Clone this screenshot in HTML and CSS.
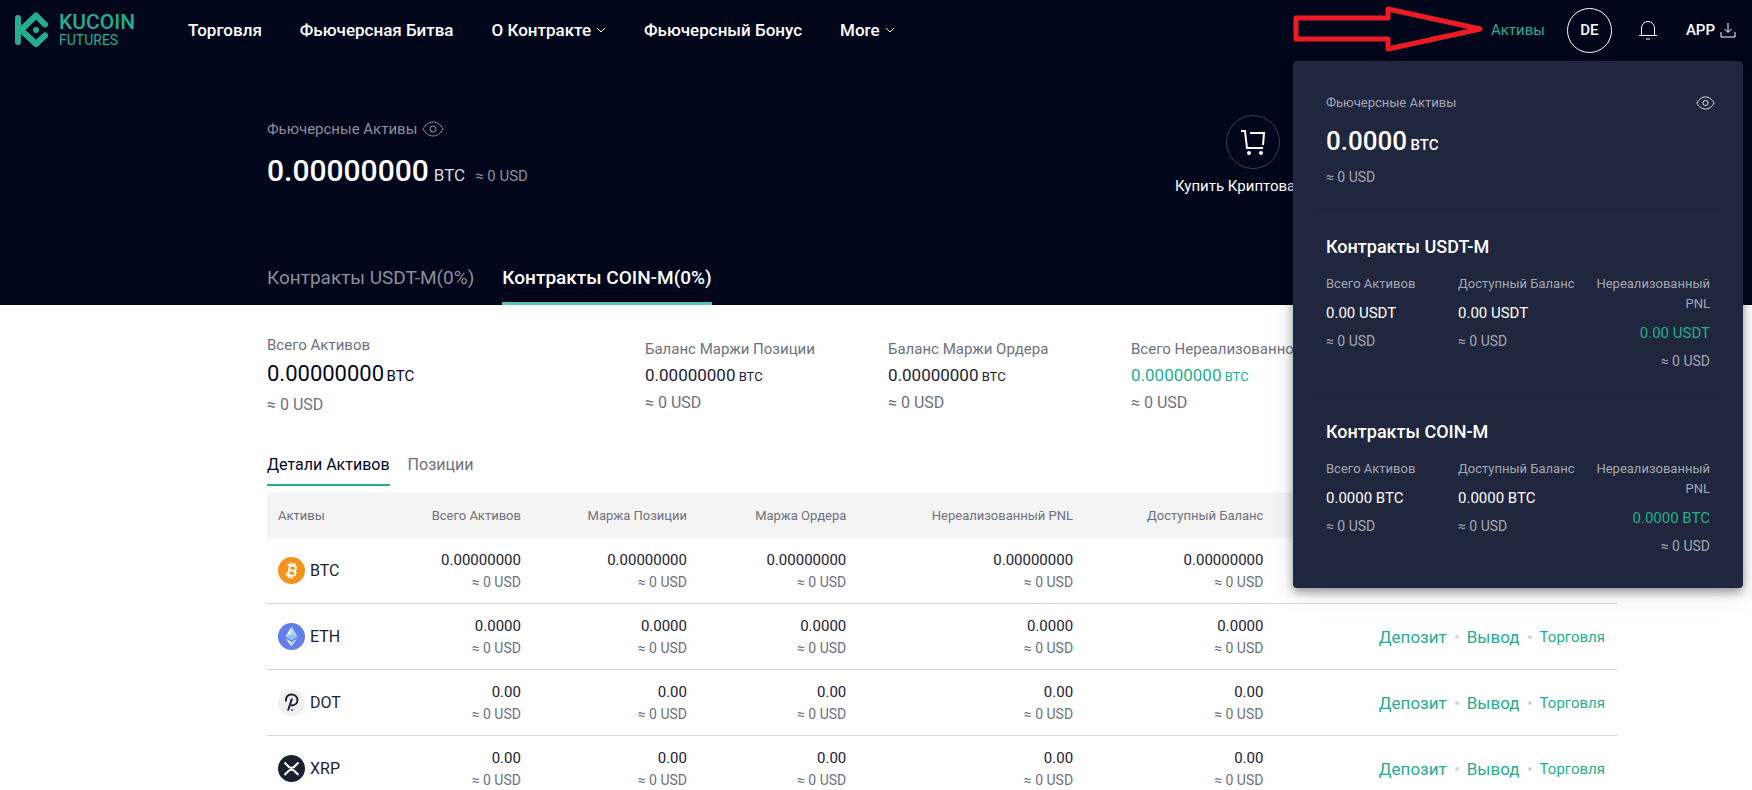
FILE: index.html
```html
<!DOCTYPE html>
<html lang="ru">
<head>
    <meta charset="UTF-8">
    <meta name="viewport" content="width=device-width, initial-scale=1.0">
    <title>KuCoin Futures</title>

    <link rel="stylesheet" href="styles.css">
</head>

<body>

    <svg class="sprite" aria-hidden="true">
        <symbol id="eye" viewBox="0 0 22 16">
            <path d="M1 8C3.500 3.500 7 1 11 1s7.500 2.500 10 7c-2.500 4.500-6 7-10 7S3.500 12.500 1 8z"/>
            <circle cx="11" cy="8" r="3"/>
        </symbol>
        <symbol id="chevron" viewBox="0 0 10 6">
            <path d="M1 1l4 4 4-4"/>
        </symbol>
    </svg>

    <header class="header">
        <a class="logo" href="#">
            <svg width="33" height="36" viewBox="0 0 33 36">
                <path class="logo-line" d="M3 6v24M30 12.500L21 3.500 6 18l15 14 9-8.500"/>
                <circle cx="21" cy="18" r="3"/>
            </svg>
            <span class="logo-text">
                <span class="logo-name">KUCOIN</span>
                <span class="logo-sub">FUTURES</span>
            </span>
        </a>

        <nav class="nav">
            <a href="#">Торговля</a>
            <a href="#">Фьючерсная Битва</a>
            <a href="#">О Контракте <svg class="chevron"><use href="#chevron"/></svg></a>
            <a href="#">Фьючерсный Бонус</a>
            <a href="#">More <svg class="chevron"><use href="#chevron"/></svg></a>
        </nav>

        <div class="user-menu">
            <div class="assets">
                <svg class="arrow" width="192" height="50" viewBox="0 0 192 50">
                    <path d="M4 14h92V5l92 20-92 20V35H4z"/>
                </svg>
                <a class="assets-link" href="#">Активы</a>
            </div>
            <button class="avatar">DE</button>
            <button class="icon-button" aria-label="Уведомления">
                <svg width="20" height="20" viewBox="0 0 20 20">
                    <path d="M1 15.500h18M3.500 15V8a6.500 6.500 0 0 1 13 0v7M8 19h4"/>
                </svg>
            </button>
            <a class="app" href="#">APP
                <svg width="16" height="16" viewBox="0 0 16 16">
                    <path d="M8 1v9M4.500 7L8 10.500 11.500 7M1 10v5h14v-5"/>
                </svg>
            </a>
        </div>

        <section class="panel">
            <div class="panel-block">
                <div class="panel-head">
                    <p class="muted">Фьючерсные Активы</p>
                    <button class="icon-button" aria-label="Скрыть баланс">
                        <svg width="19" height="14"><use href="#eye"/></svg>
                    </button>
                </div>
                <p class="panel-total">0.0000 <small>BTC</small></p>
                <p class="panel-usd">≈ 0 USD</p>
            </div>

            <div class="panel-block">
                <h2>Контракты USDT-M</h2>
                <div class="panel-grid">
                    <div>
                        <p class="muted">Всего Активов</p>
                        <p class="panel-value">0.00 USDT</p>
                        <p class="panel-usd">≈ 0 USD</p>
                    </div>
                    <div>
                        <p class="muted">Доступный Баланс</p>
                        <p class="panel-value">0.00 USDT</p>
                        <p class="panel-usd">≈ 0 USD</p>
                    </div>
                    <div class="right">
                        <p class="muted">Нереализованный PNL</p>
                        <p class="panel-value green">0.00 USDT</p>
                        <p class="panel-usd">≈ 0 USD</p>
                    </div>
                </div>
            </div>

            <div class="panel-block">
                <h2>Контракты COIN-M</h2>
                <div class="panel-grid">
                    <div>
                        <p class="muted">Всего Активов</p>
                        <p class="panel-value">0.0000 BTC</p>
                        <p class="panel-usd">≈ 0 USD</p>
                    </div>
                    <div>
                        <p class="muted">Доступный Баланс</p>
                        <p class="panel-value">0.0000 BTC</p>
                        <p class="panel-usd">≈ 0 USD</p>
                    </div>
                    <div class="right">
                        <p class="muted">Нереализованный PNL</p>
                        <p class="panel-value green">0.0000 BTC</p>
                        <p class="panel-usd">≈ 0 USD</p>
                    </div>
                </div>
            </div>
        </section>
    </header>

    <section class="hero">
        <div class="hero-top">
            <div class="balance">
                <p class="balance-label">Фьючерсные Активы
                    <button class="icon-button" aria-label="Скрыть баланс">
                        <svg width="22" height="16"><use href="#eye"/></svg>
                    </button>
                </p>
                <p class="balance-value">
                    <span class="amount">0.00000000</span>
                    <span class="unit">BTC</span>
                    <span class="usd">≈ 0 USD</span>
                </p>
            </div>
            <a class="buy" href="#">
                <span class="buy-icon">
                    <svg width="26" height="26" viewBox="0 0 26 26">
                        <path d="M1 2h4l2 17h16M10 4h14l-1 12"/>
                        <circle cx="9" cy="24" r="2"/>
                        <circle cx="21" cy="24" r="2"/>
                    </svg>
                </span>
                <span>Купить Криптовалюту</span>
            </a>
        </div>
        <div class="tabs">
            <button>Контракты USDT-M(0%)</button>
            <button class="active">Контракты COIN-M(0%)</button>
        </div>
    </section>

    <main class="content">
        <div class="stats">
            <div class="stat stat-main">
                <p>Всего Активов</p>
                <p class="stat-value">0.00000000 <small>BTC</small></p>
                <p class="stat-usd">≈ 0 USD</p>
            </div>
            <div class="stat">
                <p>Баланс Маржи Позиции</p>
                <p class="stat-value">0.00000000 <small>BTC</small></p>
                <p class="stat-usd">≈ 0 USD</p>
            </div>
            <div class="stat">
                <p>Баланс Маржи Ордера</p>
                <p class="stat-value">0.00000000 <small>BTC</small></p>
                <p class="stat-usd">≈ 0 USD</p>
            </div>
            <div class="stat">
                <p>Всего Нереализованного PNL</p>
                <p class="stat-value green">0.00000000 <small>BTC</small></p>
                <p class="stat-usd">≈ 0 USD</p>
            </div>
        </div>

        <div class="subtabs">
            <button class="active">Детали Активов</button>
            <button>Позиции</button>
        </div>

        <table class="coins">
            <thead>
                <tr>
                    <th class="col-coin">Активы</th>
                    <th class="col-total">Всего Активов</th>
                    <th class="col-position">Маржа Позиции</th>
                    <th class="col-order">Маржа Ордера</th>
                    <th class="col-pnl">Нереализованный PNL</th>
                    <th class="col-free">Доступный Баланс</th>
                    <th></th>
                </tr>
            </thead>
            <tbody>
                <tr>
                    <td>
                        <span class="coin">
                            <svg width="27" height="27" viewBox="0 0 27 27">
                                <circle cx="13.500" cy="13.500" r="13.500" fill="#f7931a"/>
                                <g transform="rotate(12 13.500 13.500)" fill="none" stroke="#fff" stroke-width="2">
                                    <path d="M8.500 8.500h6.500a2.500 2.500 0 0 1 0 5h-4M8.500 18.500h7a2.500 2.500 0 0 0 0-5M11 8.500v10M12 5.500v3M15 5.500v3M12 18.500v3M15 18.500v3"/>
                                </g>
                            </svg>
                            BTC
                        </span>
                    </td>
                    <td>0.00000000<small>≈ 0 USD</small></td>
                    <td>0.00000000<small>≈ 0 USD</small></td>
                    <td>0.00000000<small>≈ 0 USD</small></td>
                    <td>0.00000000<small>≈ 0 USD</small></td>
                    <td>0.00000000<small>≈ 0 USD</small></td>
                    <td><div class="links"><a href="#">Депозит</a><i></i><a href="#">Вывод</a><i></i><a class="trade" href="#">Торговля</a></div></td>
                </tr>
                <tr>
                    <td>
                        <span class="coin">
                            <svg width="27" height="27" viewBox="0 0 27 27">
                                <circle cx="13.500" cy="13.500" r="13.500" fill="#627eea"/>
                                <path d="M13.500 3.500v11.500l-6-1.500z" fill="#eef6ff"/>
                                <path d="M13.500 3.500V15l6-1.500z" fill="#b5dcfb"/>
                                <path d="M7.500 13.500l6-3 6 3-6 4z" fill="#8cc3f5"/>
                                <path d="M7.500 15.500l6 3.500v4.500z" fill="#eef6ff"/>
                                <path d="M19.500 15.500l-6 3.500v4.500z" fill="#b5dcfb"/>
                            </svg>
                            ETH
                        </span>
                    </td>
                    <td>0.0000<small>≈ 0 USD</small></td>
                    <td>0.0000<small>≈ 0 USD</small></td>
                    <td>0.0000<small>≈ 0 USD</small></td>
                    <td>0.0000<small>≈ 0 USD</small></td>
                    <td>0.0000<small>≈ 0 USD</small></td>
                    <td><div class="links"><a href="#">Депозит</a><i></i><a href="#">Вывод</a><i></i><a class="trade" href="#">Торговля</a></div></td>
                </tr>
                <tr>
                    <td>
                        <span class="coin">
                            <svg width="27" height="27" viewBox="0 0 27 27">
                                <circle cx="13.500" cy="13.500" r="13.500" fill="#eff0f0"/>
                                <path d="M8 12.500C7 8 10 5.500 13.500 5.500c3.500 0 6 2.500 6 5.500s-2.500 5.500-6.500 5.500M14 9.500L10 21.500" fill="none" stroke="#1b1f33" stroke-width="2"/>
                                <circle cx="14" cy="21" r="1" fill="#e6007a"/>
                            </svg>
                            DOT
                        </span>
                    </td>
                    <td>0.00<small>≈ 0 USD</small></td>
                    <td>0.00<small>≈ 0 USD</small></td>
                    <td>0.00<small>≈ 0 USD</small></td>
                    <td>0.00<small>≈ 0 USD</small></td>
                    <td>0.00<small>≈ 0 USD</small></td>
                    <td><div class="links"><a href="#">Депозит</a><i></i><a href="#">Вывод</a><i></i><a class="trade" href="#">Торговля</a></div></td>
                </tr>
                <tr>
                    <td>
                        <span class="coin">
                            <svg width="27" height="27" viewBox="0 0 27 27">
                                <circle cx="13.500" cy="13.500" r="13.500" fill="#1b1f2e"/>
                                <path d="M6.500 7.500l4 4a4 4 0 0 0 6 0l4-4M6.500 20l4-4a4 4 0 0 1 6 0l4 4" fill="none" stroke="#fff" stroke-width="2"/>
                            </svg>
                            XRP
                        </span>
                    </td>
                    <td>0.00<small>≈ 0 USD</small></td>
                    <td>0.00<small>≈ 0 USD</small></td>
                    <td>0.00<small>≈ 0 USD</small></td>
                    <td>0.00<small>≈ 0 USD</small></td>
                    <td>0.00<small>≈ 0 USD</small></td>
                    <td><div class="links"><a href="#">Депозит</a><i></i><a href="#">Вывод</a><i></i><a class="trade" href="#">Торговля</a></div></td>
                </tr>
            </tbody>
        </table>
    </main>

</body>
</html>
```
FILE: styles.css
```css
*{
    padding: 0;
    margin: 0;
    box-sizing: border-box;
}
body{
    font-family: Roboto, "Liberation Sans", Arial, sans-serif;
    background: white;
    color: #1d2233;
    overflow: hidden;
}
a{
    color: inherit;
    text-decoration: none;
}
button{
    border: none;
    background: none;
    color: inherit;
    font-family: inherit;
    cursor: pointer;
}
svg{
    display: block;
    fill: none;
    stroke: currentColor;
}
.sprite{
    position: absolute;
    width: 0;
    height: 0;
}
.icon-button{
    display: flex;
    align-items: center;
}
.green{
    color: #24ae8f;
}

/* header */
.header{
    position: relative;
    display: flex;
    align-items: center;
    height: 60px;
    padding: 0 16px 0 15px;
    background: #01061b;
    color: white;
}
.logo{
    display: flex;
    align-items: center;
    gap: 11px;
    width: 173px;
    color: #24ae8f;
}
.logo-line{
    stroke-width: 6;
    stroke-linecap: round;
    stroke-linejoin: round;
}
.logo circle{
    fill: #24ae8f;
    stroke: none;
}
.logo-text{
    display: flex;
    flex-direction: column;
}
.logo-name{
    font-size: 21px;
    line-height: 20px;
    font-weight: 500;
}
.logo-sub{
    font-size: 14px;
    line-height: 16px;
}
.nav{
    display: flex;
    gap: 38px;
    font-size: 17px;
    font-weight: 500;
}
.nav a{
    display: flex;
    align-items: center;
    gap: 5px;
}
.chevron{
    width: 10px;
    height: 6px;
}
.user-menu{
    display: flex;
    align-items: center;
    margin-left: auto;
    font-size: 15px;
}
.assets{
    position: relative;
    margin-right: 22px;
    color: #24ae8f;
}
.arrow{
    position: absolute;
    right: 100%;
    top: 50%;
    margin: -26px 7px 0 0;
    stroke: #ed1c24;
    stroke-width: 5;
    stroke-linejoin: round;
}
.avatar{
    width: 45px;
    height: 45px;
    margin-right: 26px;
    border: 1px solid white;
    border-radius: 50%;
    font-size: 15px;
    font-weight: 500;
}
.app{
    display: flex;
    align-items: center;
    gap: 5px;
    margin-left: 28px;
    font-weight: 500;
}

/* assets dropdown */
.panel{
    position: absolute;
    top: 61px;
    right: 9px;
    z-index: 1;
    width: 450px;
    padding: 0 22px 8px;
    border-radius: 4px;
    background: #1f263e;
    box-shadow: 0 4px 10px rgba(0, 8, 30, 0.4), 0 4px 30px rgba(0, 8, 30, 0.1);
}
.panel-block{
    padding: 24px 11px;
    font-size: 14px;
    line-height: 20px;
}
.panel-block:first-child{
    padding: 32px 11px 23px;
}
.panel-block + .panel-block{
    border-top: 1px dotted #182033;
}
.panel-head{
    display: flex;
    justify-content: space-between;
}
.panel-head .icon-button{
    margin-right: -5px;
}
.muted{
    font-size: 13px;
    color: #a5a8b2;
}
.panel-usd{
    color: #a5a8b2;
}
.panel-total{
    margin: 10px 0 4px;
    font-size: 26px;
    line-height: 36px;
    font-weight: 500;
}
.panel-total small{
    margin-left: -3px;
    font-size: 15px;
}
.panel h2{
    margin-bottom: 15px;
    font-size: 18px;
    line-height: 24px;
    font-weight: 500;
}
.panel-grid{
    display: grid;
    grid-template-columns: 132px 118px 1fr;
}
.panel-value{
    margin: 9px 0 8px;
    font-size: 15px;
}
.right{
    text-align: right;
}

/* hero */
.hero{
    padding: 55px 135px 0 267px;
    background: #01061b;
    color: white;
}
.hero-top{
    display: grid;
    grid-template-columns: 908fr 442fr;
    min-height: 151px;
}
.balance{
    padding-top: 2px;
}
.balance-label{
    display: flex;
    align-items: center;
    gap: 5px;
    font-size: 15px;
    line-height: 24px;
    color: #8c8f9a;
}
.balance-value{
    display: flex;
    align-items: baseline;
    margin-top: 10px;
    line-height: 40px;
}
.amount{
    font-size: 30px;
    font-weight: 500;
}
.unit{
    margin: 0 10px 0 5px;
    font-size: 17px;
    color: #d9dae0;
}
.usd{
    font-size: 15px;
    color: #8c8f9a;
}
.buy{
    display: flex;
    flex-direction: column;
    align-items: center;
    justify-self: start;
    gap: 5px;
    font-size: 15px;
    line-height: 24px;
}
.buy-icon{
    display: flex;
    align-items: center;
    justify-content: center;
    width: 54px;
    height: 54px;
    border: 1px solid #3a4052;
    border-radius: 50%;
}
.buy-icon svg{
    stroke-width: 2;
}
.buy-icon circle{
    fill: white;
    stroke: none;
}
.tabs{
    display: flex;
    gap: 28px;
}
.tabs button{
    padding-bottom: 12px;
    border-bottom: 3px solid transparent;
    font-size: 19px;
    line-height: 24px;
    color: #8c8f9a;
}
.tabs .active{
    border-color: #55c7b1;
    color: white;
    font-weight: 500;
}

/* content */
.content{
    padding: 28px 135px 0 267px;
}
.stats{
    display: grid;
    grid-template-columns: 28fr 18fr 18fr 36fr;
}
.stat{
    padding-top: 4px;
    font-size: 15px;
    line-height: 24px;
    color: #6d717d;
}
.stat-value{
    margin: 2px 0;
    font-size: 17px;
    color: #1d2233;
}
.stat-value small{
    margin-left: -1px;
    font-size: 13px;
}
.stat-usd{
    font-size: 16px;
}
.stat-main{
    padding-top: 0;
}
.stat-main .stat-value{
    margin: 4px 0;
    font-size: 22px;
    line-height: 26px;
    color: #01081e;
}
.stat-main small{
    margin-left: -3px;
    font-size: 15px;
}
.stat-value.green{
    color: #24ae8f;
}
.subtabs{
    display: flex;
    gap: 18px;
    margin: 36px 0 7px;
}
.subtabs button{
    padding-bottom: 7px;
    border-bottom: 2px solid transparent;
    font-size: 16px;
    line-height: 24px;
    color: #6d717d;
}
.subtabs .active{
    border-color: #24ae8f;
    color: #01081e;
}
.coins{
    width: 100%;
    table-layout: fixed;
    border-spacing: 0;
    font-size: 15px;
    line-height: 20px;
}
.col-coin{ width: 10%; }
.col-total{ width: 9.7%; }
.col-position{ width: 12.3%; }
.col-order{ width: 11.8%; }
.col-pnl{ width: 16.8%; }
.col-free{ width: 14.1%; }
.coins th{
    height: 45px;
    padding-right: 12px;
    background: #f4f4f4;
    font-size: 13px;
    font-weight: 400;
    color: #6d717d;
    text-align: right;
    white-space: nowrap;
}
.coins th:first-child{
    padding-left: 11px;
    border-radius: 4px 0 0 0;
    text-align: left;
}
.coins th:last-child{
    border-radius: 0 4px 0 0;
}
.coins td{
    height: 66px;
    padding: 0 12px 0 0;
    border-bottom: 1px solid #d5d6da;
    text-align: right;
}
.coins td:first-child{
    padding-left: 11px;
}
.coins td small{
    display: block;
    padding-top: 2px;
    font-size: 14px;
    color: #6d717d;
}
.coin{
    display: flex;
    align-items: center;
    gap: 5px;
    font-size: 16px;
}
.coin svg{
    stroke: none;
}
.links{
    display: flex;
    align-items: center;
    justify-content: flex-end;
    gap: 8px;
    font-size: 17px;
    color: #24ae8f;
}
.links .trade{
    font-size: 15px;
}
.links i{
    width: 4px;
    height: 4px;
    border-radius: 50%;
    background: #d5d6da;
}
```
